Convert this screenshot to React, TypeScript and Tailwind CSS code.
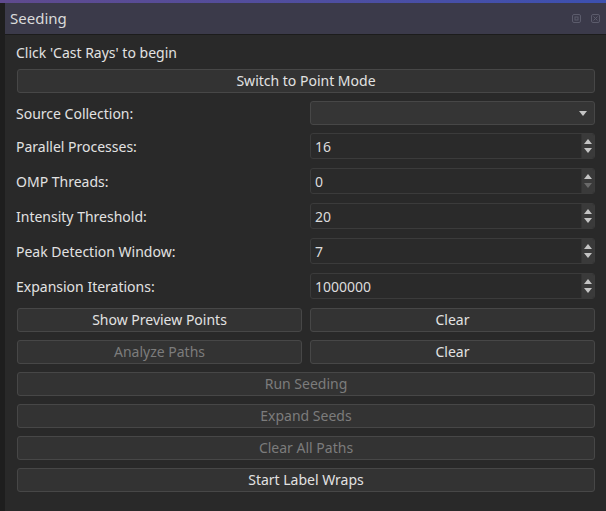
import React from 'react';

const FONT = { fontFamily: '"Noto Sans", "Open Sans", sans-serif' };

const Btn: React.FC<{ label: string; disabled?: boolean }> = ({ label, disabled }) => (
  <div
    className={`h-[24px] pb-[2px] flex items-center justify-center rounded-[3px] border border-[#474747] bg-[#333333] text-[14px] ${
      disabled ? 'text-[#7c7c7c]' : 'text-[#e2e2e2]'
    }`}
  >
    {label}
  </div>
);

const Spin: React.FC<{ value: string; downOff?: boolean }> = ({ value, downOff }) => (
  <div className="h-[26px] flex rounded-[3px] border border-[#3b3b3b] bg-[#2a2a2a]">
    <div className="flex-1 flex items-center pl-[4px] text-[14px] text-[#dcdcdc]">{value}</div>
    <div className="w-[13px] flex flex-col items-center justify-center gap-[4px] bg-[#3a3a3a] rounded-r-[2px] border-l border-[#333]">
      <svg width="8" height="5" viewBox="0 0 8 5">
        <path d="M0 5 L4 0 L8 5 Z" fill="#c4c4c4" />
      </svg>
      <svg width="8" height="5" viewBox="0 0 8 5">
        <path d="M0 0 L8 0 L4 5 Z" fill={downOff ? '#6a6a6a' : '#c4c4c4'} />
      </svg>
    </div>
  </div>
);

const rows: { label: string; value: string; downOff?: boolean }[] = [
  { label: 'Parallel Processes:', value: '16' },
  { label: 'OMP Threads:', value: '0', downOff: true },
  { label: 'Intensity Threshold:', value: '20' },
  { label: 'Peak Detection Window:', value: '7' },
  { label: 'Expansion Iterations:', value: '1000000' },
];

export default function App() {
  return (
    <div className="w-[606px] h-[511px] flex flex-col bg-[#1f1f1f]" style={FONT}>
      <div className="h-[3px] bg-gradient-to-r from-[#5f4a8e] to-[#3c50b0]" />
      <div className="flex-1 flex">
        <div className="w-[5px] bg-[#1e1e1e]" />
        <div className="flex-1 flex flex-col">
          <div className="h-[32px] flex items-center justify-between pl-[5px] pr-[6px] bg-[#3b3a4a] border-b border-[#1c1c1c]">
            <span className="text-[15px] text-[#dadada]">Seeding</span>
            <div className="flex items-center gap-[10px] pb-[1px]">
              <svg width="9" height="9" viewBox="0 0 9 9">
                <rect x="0.5" y="0.5" width="8" height="8" rx="1.5" fill="none" stroke="#5c5c6c" />
                <rect x="3" y="3" width="3" height="3" fill="none" stroke="#5c5c6c" />
              </svg>
              <svg width="9" height="9" viewBox="0 0 9 9">
                <rect x="0.5" y="0.5" width="8" height="8" rx="1.5" fill="none" stroke="#5c5c6c" />
                <path d="M2.5 2.5 L6.5 6.5 M6.5 2.5 L2.5 6.5" stroke="#5c5c6c" />
              </svg>
            </div>
          </div>
          <div className="flex-1 bg-[#292929] pl-[11px] pr-[11px] pt-[8px] flex flex-col">
            <div className="h-[18px] flex items-center text-[14px] text-[#e2e2e2]">Click 'Cast Rays' to begin</div>
            <div className="mt-[8px] ml-px">
              <Btn label="Switch to Point Mode" />
            </div>
            <div className="mt-[8px] grid grid-cols-2 gap-x-[9px] items-center">
              <div className="text-[14px] text-[#e2e2e2]">Source Collection:</div>
              <div className="h-[24px] flex items-center justify-end pr-[7px] rounded-[3px] border border-[#474747] bg-[#353535]">
                <svg width="8" height="5" viewBox="0 0 8 5">
                  <path d="M0 0 L8 0 L4 5 Z" fill="#c4c4c4" />
                </svg>
              </div>
            </div>
            <div className="mt-[8px] flex flex-col gap-[9px]">
              {rows.map((r) => (
                <div key={r.label} className="grid grid-cols-2 gap-x-[9px] items-center">
                  <div className="text-[14px] text-[#e2e2e2]">{r.label}</div>
                  <Spin value={r.value} downOff={r.downOff} />
                </div>
              ))}
            </div>
            <div className="mt-[9px] ml-px flex flex-col gap-[8px]">
              <div className="grid grid-cols-2 gap-x-[8px]">
                <Btn label="Show Preview Points" />
                <Btn label="Clear" />
              </div>
              <div className="grid grid-cols-2 gap-x-[8px]">
                <Btn label="Analyze Paths" disabled />
                <Btn label="Clear" />
              </div>
              <Btn label="Run Seeding" disabled />
              <Btn label="Expand Seeds" disabled />
              <Btn label="Clear All Paths" disabled />
              <Btn label="Start Label Wraps" />
            </div>
          </div>
        </div>
      </div>
    </div>
  );
}
